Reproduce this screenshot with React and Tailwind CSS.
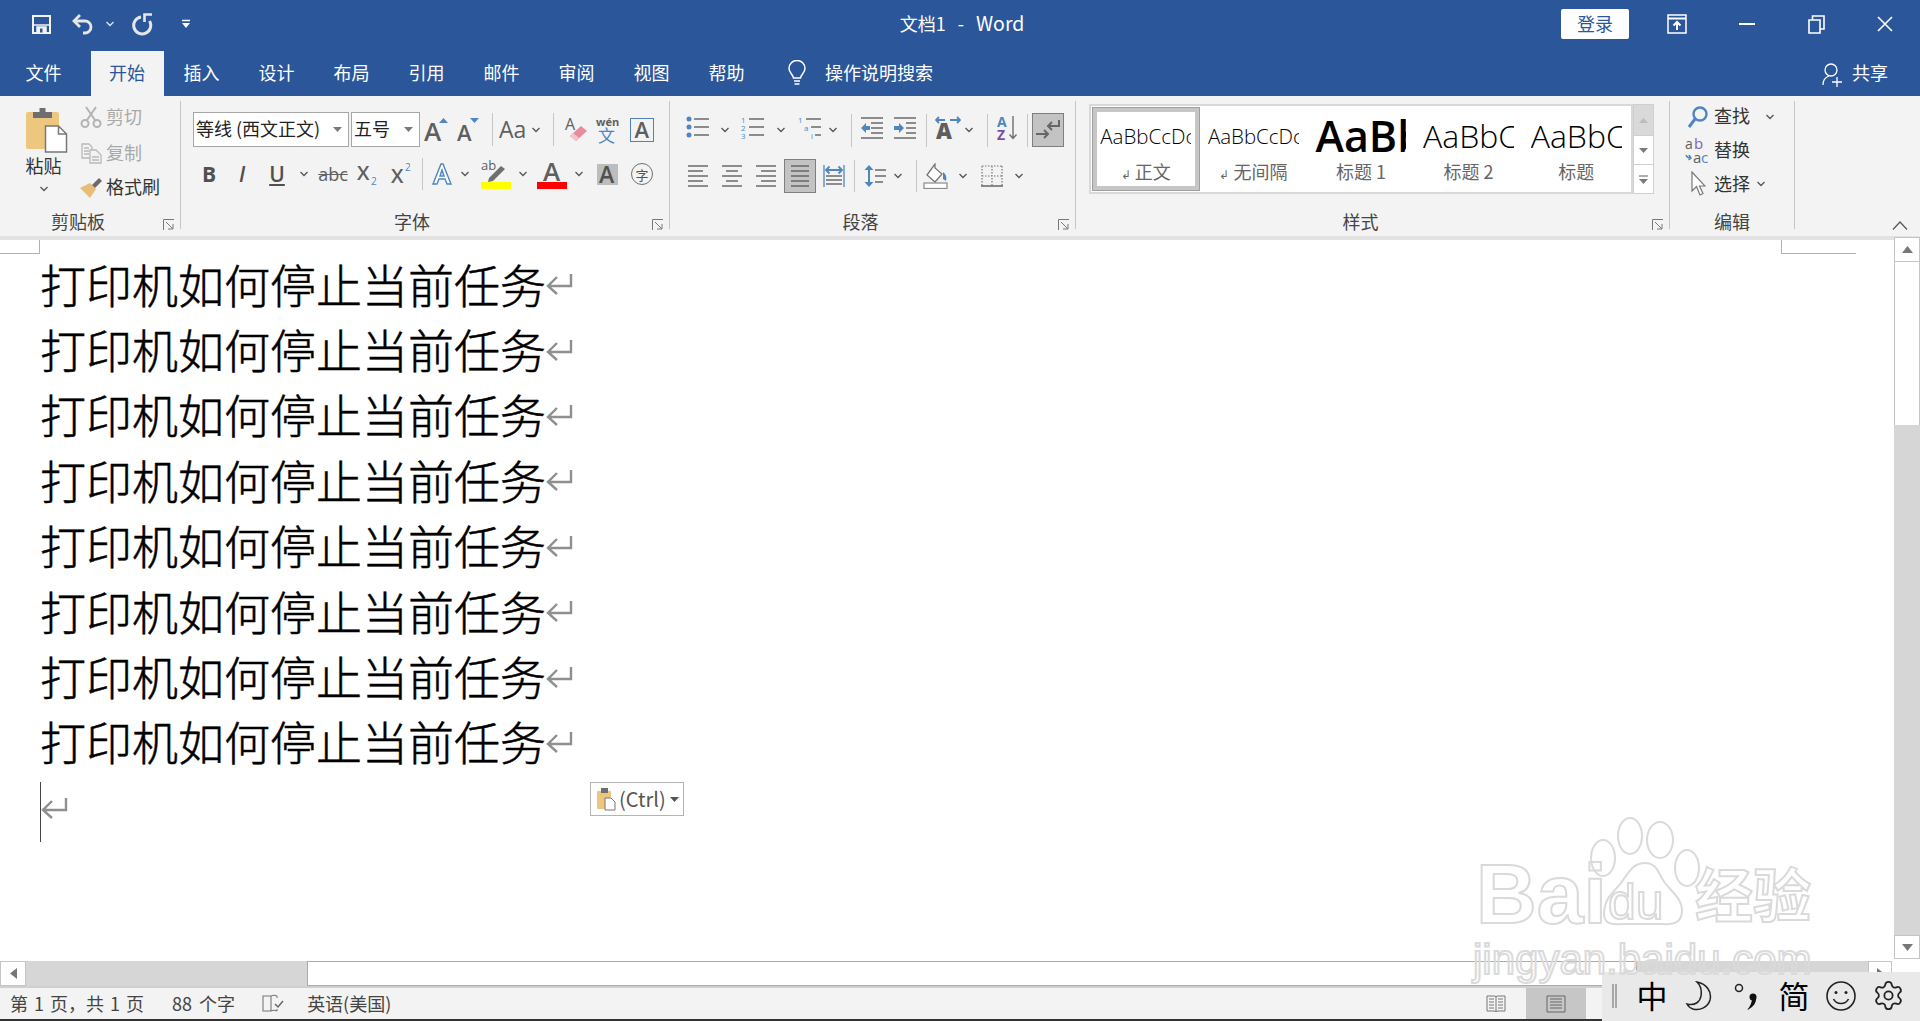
import React from "react";
import { Settings } from "lucide-react";

const G = "#5f5f5f";
const B = "#4f86c1";

const C = ({ className = "", children }) => (
  <div className={"flex items-center justify-center shrink-0 " + className}>{children}</div>
);
const Sep = ({ className = "" }) => <div className={"w-px bg-[#c6c6c6] shrink-0 " + className} />;
const Chev = ({ color = "#555" }) => (
  <svg width="10" height="6" viewBox="0 0 10 6"><path d="M1.5 1 L5 4.5 L8.5 1" fill="none" stroke={color} strokeWidth="1.3" /></svg>
);
const Launcher = () => (
  <svg width="12" height="12" viewBox="0 0 12 12" className="absolute right-[5px] bottom-[-2px]">
    <path d="M.5 11V.5H11M3 3l6.5 6.5M5 10h5V5" fill="none" stroke="#777" strokeWidth="1" />
  </svg>
);
const Letter = ({ x, y, s, fill = G, w = 600, children, f = "Open Sans" }) => (
  <text x={x} y={y} fontSize={s} fill={fill} fontWeight={w} fontFamily={f}>{children}</text>
);
const Lines = ({ rows, stroke = G, sw = 1.3 }) => (
  <g stroke={stroke} strokeWidth={sw}>
    {rows.map((r, i) => <line key={i} x1={r[0]} x2={r[1]} y1={r[2]} y2={r[2]} />)}
  </g>
);

const Tab = ({ children }) => <div className="w-[75px] text-center text-white">{children}</div>;

function TitleBar() {
  return (
    <div className="h-[51px] bg-[#2b579a] flex items-center pb-[3px] text-white shrink-0">
      <div className="flex-1 flex items-center pl-[29px]">
        <C className="w-[24px]">
          <svg width="19" height="19" viewBox="0 0 19 19"><path d="M1 1h17v17H1z" fill="none" stroke="#f2f2f2" strokeWidth="2" /><rect x="1" y="1" width="17" height="9" fill="none" stroke="#f2f2f2" strokeWidth="1.500" /><path d="M5 18v-6h9v6" fill="#f2f2f2" stroke="#f2f2f2" strokeWidth="1.500" /><rect x="8" y="13.500" width="2.500" height="4" fill="#2b579a" /></svg>
        </C>
        <C className="w-[24px] ml-[18px]">
          <svg width="24" height="24" viewBox="0 0 24 24" fill="none" stroke="#e6e6e6" strokeWidth="2.800"><path d="M9 3 L3 9 L9 15" /><path d="M3 9h11a6 6 0 0 1 0 12h-2" /></svg>
        </C>
        <C className="w-[10px] ml-[10px]"><Chev color="#dfe6f0" /></C>
        <C className="w-[24px] ml-[15px]">
          <svg width="22" height="24" viewBox="0 0 22 24" fill="none" stroke="#e6e6e6" strokeWidth="3"><path d="M10 5 A8.500 8.500 0 1 0 18.500 9" /><path d="M13.500 10 V2.500 H21" strokeWidth="2.600" /></svg>
        </C>
        <C className="w-[12px] ml-[26px]">
          <svg width="10" height="10" viewBox="0 0 10 10"><path d="M1 1.500h8" stroke="#fff" strokeWidth="1.500" /><path d="M1 4h8L5 9z" fill="#fff" /></svg>
        </C>
      </div>
      <div className="text-[18px] leading-[24px] flex items-center pb-[2px]">
        <span>文档1</span><span className="ml-[12px]">-</span><span className="ml-[12px] text-[19.500px]">Word</span>
      </div>
      <div className="flex-1 flex items-center justify-end pr-[25px]">
        <C className="w-[68px] h-[30px] bg-white rounded-[2px] text-[#2b579a] text-[18px] leading-[30px] pb-[2px]">登录</C>
        <C className="w-[20px] ml-[38px]">
          <svg width="20" height="20" viewBox="0 0 20 20" fill="none" stroke="#fff"><path d="M1 1h18v18H1z" strokeWidth="1.500" /><path d="M1 4.500h18" strokeWidth="2" /><path d="M10 16V8M6.500 11.500 10 8l3.500 3.500" strokeWidth="2" /></svg>
        </C>
        <C className="w-[20px] ml-[50px]"><div className="w-[16px] h-[2px] bg-white" /></C>
        <C className="w-[20px] ml-[49px]">
          <svg width="17" height="19" viewBox="0 0 17 19" fill="none" stroke="#fff" strokeWidth="1.600"><path d="M1 5h11v13H1z" /><path d="M4.500 5V1H16v13h-4" /></svg>
        </C>
        <C className="w-[20px] ml-[49px]">
          <svg width="16" height="16" viewBox="0 0 16 16" stroke="#fff" strokeWidth="1.600"><path d="M1 1l14 14M15 1 1 15" /></svg>
        </C>
      </div>
    </div>
  );
}

function TabRow() {
  return (
    <div className="h-[45px] bg-[#2b579a] flex items-stretch text-[18px] shrink-0">
      <div className="w-[91px] pr-[4px] flex items-center justify-center pb-[2px] text-white">文件</div>
      <div className="w-[73px] bg-[#f3f3f3] text-[#2b579a] pr-px flex items-center justify-center pb-[2px]">开始</div>
      <div className="flex items-center pb-[2px]">
        <Tab>插入</Tab><Tab>设计</Tab><Tab>布局</Tab><Tab>引用</Tab><Tab>邮件</Tab><Tab>审阅</Tab><Tab>视图</Tab><Tab>帮助</Tab>
        <C className="w-[22px] ml-[22px]">
          <svg width="20" height="26" viewBox="0 0 20 26" fill="none" stroke="#fff" strokeWidth="1.500"><path d="M6.500 18c0-3-4.500-5-4.500-9.500a8 8 0 0 1 16 0C18 13 13.500 15 13.500 18z" /><path d="M7 21h6M7.500 24h5" /></svg>
        </C>
        <span className="ml-[17px] text-white">操作说明搜索</span>
      </div>
      <div className="flex-1 flex items-center justify-end pr-[32px] pb-[2px] text-white">
        <svg width="20" height="26" viewBox="0 0 20 26" fill="none" stroke="#fff" strokeWidth="1.300" className="mr-[10px] mt-[4px]"><circle cx="9" cy="8" r="6" /><path d="M1 23c0-5 3-8 6-9M15 15v10M10 20h10" /></svg>
        <span>共享</span>
      </div>
    </div>
  );
}

function Group({ className = "", label, labelPad = "", launcher = true, children }) {
  return (
    <div className={"flex flex-col shrink-0 border-r border-[#c6c6c6] relative " + className}>
      <div className="h-[112px]">{children}</div>
      <div className={"h-[16px] leading-[16px] text-[18px] text-[#444] text-center relative " + labelPad}>{label}</div>
      {launcher && <Launcher />}
    </div>
  );
}

function Clipboard() {
  return (
    <Group className="w-[181px]" label="剪贴板" labelPad="pr-[24px]">
      <div className="flex">
        <div className="ml-[7px] w-[73px] flex flex-col items-center pt-[6px]">
          <svg width="44" height="46" viewBox="0 0 44 46" className="ml-[6px]">
            <rect x="1" y="5" width="33" height="37" rx="2" fill="#eec77f" />
            <path d="M8 11V5h6.500V1h6v4H27v6z" fill="#6e6e6e" />
            <path d="M20.500 19h13l8 8v18H20.500z" fill="#fff" stroke="#777" strokeWidth="1.500" />
            <path d="M33.500 19v8h8" fill="none" stroke="#777" strokeWidth="1.500" />
          </svg>
          <div className="text-[18px] leading-[24px] text-[#333]">粘贴</div>
          <div className="mt-[8px] h-[8px] flex items-center"><Chev /></div>
        </div>
        <div className="flex flex-col text-[18px] -ml-[1px]">
          <div className="h-[32px] flex items-center text-[#a9a9a9]">
            <C className="w-[24px]">
              <svg width="22" height="22" viewBox="0 0 22 22" fill="none" stroke="#b3b3b3" strokeWidth="2"><circle cx="5" cy="17.500" r="3.500" /><circle cx="17" cy="17.500" r="3.500" /><path d="M7 14 16 1M15 14 6 1" /></svg>
            </C>
            <span className="ml-[3px] pb-[2px]">剪切</span>
          </div>
          <div className="h-[32px] mt-[4px] flex items-center text-[#a9a9a9]">
            <C className="w-[24px]">
              <svg width="21" height="21" viewBox="0 0 21 21" fill="none" stroke="#b9b9b9" strokeWidth="1.300"><path d="M1 1h7l3 3v11H1zM3 5h5M3 8h5M3 11h5" /><path d="M9 7h6l5 5v8H9zM11 14h7M11 17h7" fill="#f3f3f3" /></svg>
            </C>
            <span className="ml-[3px] pb-[2px]">复制</span>
          </div>
          <div className="h-[32px] mt-[3px] flex items-center text-[#333]">
            <C className="w-[24px]">
              <svg width="24" height="22" viewBox="0 0 24 22"><path d="M1 11 11 6l6 6-6 9z" fill="#e8bd77" /><path d="M13 8 20 1l3 3-7 7z" fill="#6b6b6b" /></svg>
            </C>
            <span className="ml-[3px] pb-[3px]">格式刷</span>
          </div>
        </div>
      </div>
    </Group>
  );
}

const ComboCaret = () => <svg width="9" height="5" viewBox="0 0 9 5"><path d="M0 0h9L4.500 5z" fill="#7a7a7a" /></svg>;

function FontGroup() {
  return (
    <Group className="w-[489px]" label="字体" labelPad="pr-[26px]">
      <div className="flex items-center h-[35px] mt-[11px] pl-[12px]">
        <div className="w-[156px] h-[35px] bg-white border border-[#a6a6a6] flex items-center pl-[2px] pr-[6px] text-[18px] text-[#222] justify-between">
          <span className="pb-[2px]">等线 (西文正文)</span><ComboCaret />
        </div>
        <div className="w-[69px] ml-[2px] h-[35px] bg-white border border-[#a6a6a6] flex items-center pl-[2px] pr-[6px] text-[18px] text-[#222] justify-between">
          <span className="pb-[2px]">五号</span><ComboCaret />
        </div>
        <C className="w-[26px] ml-[4px]">
          <svg width="26" height="26" viewBox="0 0 26 26"><Letter x="0" y="24" s="26">A</Letter><path d="M15 6h9l-4.500-5z" fill={B} /></svg>
        </C>
        <C className="w-[38px]">
          <svg width="26" height="26" viewBox="0 0 26 26"><Letter x="1" y="24" s="22">A</Letter><path d="M14 1h9l-4.500 5z" fill={B} /></svg>
        </C>
        <Sep className="ml-[4px] h-[33px]" />
        <C className="w-[26px] ml-[7px]">
          <svg width="28" height="24" viewBox="0 0 28 24" className="overflow-visible"><Letter x="0" y="20" s="23" w="500">Aa</Letter></svg>
        </C>
        <C className="w-[10px] ml-[5px]"><Chev /></C>
        <Sep className="ml-[12px] h-[33px]" />
        <C className="w-[26px] ml-[9px]">
          <svg width="24" height="26" viewBox="0 0 24 26"><Letter x="1" y="13" s="16" w="500">A</Letter><path d="M6 19 17 9l6 5-11 10z" fill="#e98b9d" /><path d="M6 19l6 5 3-3-6-5z" fill="#f3c4cd" /></svg>
        </C>
        <C className="w-[26px] ml-[6px]">
          <svg width="26" height="28" viewBox="0 0 26 28" className="overflow-visible"><Letter x="1" y="10" s="11" w="700">wén</Letter><Letter x="3" y="26" s="17" fill={B} w="400" f="Noto Sans CJK SC">文</Letter></svg>
        </C>
        <C className="w-[24px] h-[24px] ml-[9px] border border-[#4f81bd]">
          <svg width="20" height="20" viewBox="0 0 20 20"><Letter x="2.500" y="18" s="22">A</Letter></svg>
        </C>
      </div>
      <div className="flex items-center h-[36px] mt-[9px] pl-[16px]">
        <C className="w-[24px]"><span className="font-['Open_Sans',sans-serif] font-bold text-[21px] text-[#505050] leading-none">B</span></C>
        <C className="w-[24px] ml-[9px]"><span className="font-['Open_Sans',sans-serif] italic font-semibold text-[21px] text-[#505050] leading-none">I</span></C>
        <C className="w-[24px] ml-[11px]"><span className="font-['Open_Sans',sans-serif] font-semibold underline underline-offset-2 text-[21px] text-[#505050] leading-none">U</span></C>
        <C className="w-[10px] ml-[10px]"><Chev /></C>
        <C className="w-[32px] ml-[8px]"><span className="font-['Open_Sans',sans-serif] line-through text-[18px] text-[#606060] leading-none">abc</span></C>
        <C className="w-[24px] ml-[7px]">
          <svg width="24" height="24" viewBox="0 0 24 24"><Letter x="1" y="18" s="20">X</Letter><Letter x="15" y="23" s="10" fill={B} w="500">2</Letter></svg>
        </C>
        <C className="w-[24px] ml-[10px]">
          <svg width="24" height="24" viewBox="0 0 24 24"><Letter x="1" y="21" s="20">X</Letter><Letter x="15" y="9" s="10" fill={B} w="500">2</Letter></svg>
        </C>
        <Sep className="ml-[8px] h-[32px]" />
        <C className="w-[24px] ml-[7px]">
          <svg width="24" height="26" viewBox="0 0 24 26"><path d="M3 23 11 3h2l8 20h-4l-2-5H9l-2 5zM10 15h4l-2-6z" fill="#fff" stroke={B} strokeWidth="1.400" /></svg>
        </C>
        <C className="w-[10px] ml-[6px]"><Chev /></C>
        <C className="w-[28px] ml-[12px]">
          <svg width="30" height="30" viewBox="0 0 30 30" className="overflow-visible"><Letter x="0" y="11" s="13" w="400">ab</Letter><path d="M8 19 20 7l4 3-12 12-5 1z" fill="#6f6f6f" /><rect x="0" y="23" width="30" height="7" fill="#ffff00" /></svg>
        </C>
        <C className="w-[10px] ml-[8px]"><Chev /></C>
        <C className="w-[28px] ml-[10px]">
          <svg width="30" height="30" viewBox="0 0 30 30" className="overflow-visible"><Letter x="6" y="22" s="26">A</Letter><rect x="0" y="23" width="30" height="7" fill="#ff0000" /></svg>
        </C>
        <C className="w-[10px] ml-[8px]"><Chev /></C>
        <C className="w-[21px] h-[21px] ml-[13px] bg-[#bdbdbd]">
          <svg width="21" height="21" viewBox="0 0 21 21"><Letter x="2" y="19" s="23" fill="#505050">A</Letter></svg>
        </C>
        <C className="w-[24px] ml-[12px]">
          <div className="w-[22px] h-[22px] rounded-full border-[1.5px] border-[#707070] flex items-center justify-center text-[13px] leading-none text-[#555]">字</div>
        </C>
      </div>
    </Group>
  );
}

const AlignIcon = ({ rows }) => (
  <svg width="24" height="24" viewBox="0 0 24 24"><Lines sw={1.4} rows={rows} /></svg>
);

function ParaGroup() {
  return (
    <Group className="w-[406px]" label="段落" labelPad="pr-[24px]">
      <div className="flex items-center h-[34px] mt-[12px] pl-[16px]">
        <C className="w-[24px] -mt-[4px]">
          <svg width="24" height="24" viewBox="0 0 24 24"><circle cx="3" cy="3" r="2.500" fill={B} /><circle cx="3" cy="11" r="2.500" fill={B} /><circle cx="3" cy="19" r="2.500" fill={B} /><Lines sw={1.4} rows={[[8, 23, 3], [8, 23, 11], [8, 23, 19]]} /></svg>
        </C>
        <C className="w-[10px] ml-[10px]"><Chev /></C>
        <C className="w-[24px] ml-[11px] -mt-[4px]">
          <svg width="24" height="24" viewBox="0 0 24 24"><Letter x="0" y="7" s="8" fill={B} w="500">1</Letter><Letter x="0" y="15" s="8" fill={B} w="500">2</Letter><Letter x="0" y="23" s="8" fill={B} w="500">3</Letter><Lines sw={1.4} rows={[[8, 23, 3], [8, 23, 11], [8, 23, 19]]} /></svg>
        </C>
        <C className="w-[10px] ml-[11px]"><Chev /></C>
        <C className="w-[24px] ml-[12px] -mt-[4px]">
          <svg width="24" height="24" viewBox="0 0 24 24"><Letter x="0" y="7" s="8" fill={B} w="500">1</Letter><Letter x="6" y="15" s="8" fill={B} w="500">a</Letter><Letter x="13" y="23" s="8" fill={B} w="500">i</Letter><Lines sw={1.4} rows={[[8, 23, 3], [13, 23, 11], [17, 23, 19]]} /></svg>
        </C>
        <C className="w-[10px] ml-[6px]"><Chev /></C>
        <Sep className="ml-[13px] h-[33px]" />
        <C className="w-[24px] ml-[8px] -mt-[4px]">
          <svg width="24" height="24" viewBox="0 0 24 24"><Lines sw={1.4} rows={[[1, 23, 2], [11, 23, 7], [11, 23, 12], [11, 23, 17], [1, 23, 22]]} /><path d="M1 12l5-5v3h4v4H6v3z" fill={B} /></svg>
        </C>
        <C className="w-[24px] ml-[9px] -mt-[4px]">
          <svg width="24" height="24" viewBox="0 0 24 24"><Lines sw={1.4} rows={[[1, 23, 2], [13, 23, 7], [13, 23, 12], [13, 23, 17], [1, 23, 22]]} /><path d="M11 12 6 7v3H1v4h5v3z" fill={B} /></svg>
        </C>
        <Sep className="ml-[9px] h-[33px]" />
        <C className="w-[26px] ml-[8px] -mt-[4px]">
          <svg width="26" height="24" viewBox="0 0 26 24"><Letter x="1" y="23" s="22" w="800">A</Letter><path d="M1 4h9M15 4h10M4 1 1 4l3 3M22 1l3 3-3 3" fill="none" stroke={B} strokeWidth="1.800" /></svg>
        </C>
        <C className="w-[10px] ml-[3px]"><Chev /></C>
        <Sep className="ml-[13px] h-[33px]" />
        <C className="w-[24px] ml-[8px] -mt-[4px]">
          <svg width="22" height="26" viewBox="0 0 22 26"><Letter x="0" y="12" s="14" fill={B} w="700">A</Letter><Letter x="0" y="25" s="14" fill="#7b4fa6" w="700">Z</Letter><path d="M16 1v22M12.500 19.500 16 23.500l3.500-4" fill="none" stroke="#6f6f6f" strokeWidth="1.400" /></svg>
        </C>
        <Sep className="ml-[7px] h-[33px]" />
        <C className="w-[32px] h-[34px] ml-[4px] bg-[#c3c3c3] border border-[#7f7f7f]">
          <svg width="26" height="22" viewBox="0 0 26 22" fill="none" stroke="#666" strokeWidth="2"><path d="M24 1v6H13M17 3l-4 4 4 4" /><path d="M1 15h12M9 11l4 4-4 4" /></svg>
        </C>
      </div>
      <div className="flex items-center h-[34px] mt-[12px] pl-[16px]">
        <C className="w-[24px]"><AlignIcon rows={[[2, 22, 2], [2, 17, 7], [2, 22, 12], [2, 17, 17], [2, 22, 22]]} /></C>
        <C className="w-[24px] ml-[10px]"><AlignIcon rows={[[2, 22, 2], [6, 18, 7], [2, 22, 12], [6, 18, 17], [2, 22, 22]]} /></C>
        <C className="w-[24px] ml-[10px]"><AlignIcon rows={[[2, 22, 2], [7, 22, 7], [2, 22, 12], [7, 22, 17], [2, 22, 22]]} /></C>
        <C className="w-[32px] h-[34px] ml-[6px] bg-[#c3c3c3] border border-[#7f7f7f]"><AlignIcon rows={[[3, 21, 2], [3, 21, 7], [3, 21, 12], [3, 21, 17], [3, 21, 22]]} /></C>
        <C className="w-[24px] ml-[6px]">
          <svg width="24" height="24" viewBox="0 0 24 24"><Lines sw={1.4} rows={[[4, 20, 12], [4, 20, 16], [4, 20, 20]]} /><path d="M2 1v22M22 1v22" stroke={B} strokeWidth="1.300" /><path d="M4 6h16M7.500 2.500 4 6l3.500 3.500M16.500 2.500 20 6l-3.500 3.500" fill="none" stroke={B} strokeWidth="1.800" /></svg>
        </C>
        <Sep className="ml-[8px] h-[32px]" />
        <C className="w-[24px] ml-[8px]">
          <svg width="24" height="24" viewBox="0 0 24 24"><path d="M6 1 1.500 6H5v12H1.500L6 23l4.500-5H7V6h3.500z" fill={B} /><Lines sw={1.4} rows={[[12, 23, 6], [12, 23, 12], [12, 20, 18]]} /></svg>
        </C>
        <C className="w-[10px] ml-[6px]"><Chev /></C>
        <Sep className="ml-[13px] h-[32px]" />
        <C className="w-[26px] ml-[6px]">
          <svg width="26" height="26" viewBox="0 0 26 26"><path d="M12 1v4l7 6-7 8-8-7z" fill="#fff" stroke="#777" strokeWidth="1.300" /><path d="M20 9c3 2 4 5 3 9l-3-2z" fill={B} /><rect x="1" y="20" width="23" height="5.500" fill="#fff" stroke="#8a8a8a" strokeWidth="1.200" /></svg>
        </C>
        <C className="w-[10px] ml-[9px]"><Chev /></C>
        <C className="w-[24px] ml-[12px]">
          <svg width="22" height="22" viewBox="0 0 22 22" fill="none" stroke="#777" strokeWidth="1.200"><path d="M1 1h20M1 1v20M21 1v20M11 1v20M1 11h20" strokeDasharray="1.500 1.500" /><path d="M0 21h22" stroke="#666" strokeWidth="1.500" /></svg>
        </C>
        <C className="w-[10px] ml-[10px]"><Chev /></C>
      </div>
    </Group>
  );
}

const StyleItem = ({ sample, caption, mark, sel, cls }) => (
  <div className={"w-[107.600px] shrink-0 flex flex-col items-center overflow-hidden " + (sel ? "border-[5px] border-[#c6c6c6] outline outline-1 outline-[#a0a0a0] -outline-offset-1" : "")}>
    <div className={"w-[91px] h-[58px] overflow-hidden whitespace-nowrap flex items-center text-black font-['Open_Sans',sans-serif] " + (sel ? "-mt-[5px] " : "") + cls}>{sample}</div>
    <div className="text-[18px] leading-[16px] -mt-[2px] text-[#666] whitespace-nowrap">{mark && <span className="text-[12px] mr-[4px]">↲</span>}{caption}</div>
  </div>
);

function Styles() {
  return (
    <Group className="w-[594px]" label="样式" labelPad="pr-[24px]">
      <div className="ml-[13px] mt-[3px] w-[565px] h-[90px] flex">
        <div className="w-[544px] bg-white border-2 border-[#d8d8d8] flex py-px pl-px">
          <StyleItem sel mark sample="AaBbCcDc" caption="正文" cls="text-[20.500px] font-light" />
          <StyleItem mark sample="AaBbCcDc" caption="无间隔" cls="text-[20.500px] font-light" />
          <StyleItem sample="AaBbCc" caption="标题 1" cls="text-[43px] font-semibold" />
          <StyleItem sample="AaBbCc" caption="标题 2" cls="text-[32px] font-light" />
          <StyleItem sample="AaBbCc" caption="标题" cls="text-[32px] font-light" />
        </div>
        <div className="w-[21px] flex flex-col">
          <C className="h-[32px] bg-[#d9d9d9] border border-[#cfcfcf]"><svg width="9" height="5" viewBox="0 0 9 5"><path d="M0 5h9L4.500 0z" fill="#bcbcbc" /></svg></C>
          <C className="h-[29px] bg-white border border-t-0 border-[#d0d0d0]"><ComboCaret /></C>
          <C className="h-[29px] bg-white border border-t-0 border-[#d0d0d0]"><svg width="9" height="9" viewBox="0 0 9 9"><path d="M0 1h9" stroke="#7a7a7a" strokeWidth="1.200" /><path d="M0 4h9L4.500 9z" fill="#7a7a7a" /></svg></C>
        </div>
      </div>
    </Group>
  );
}

function Editing() {
  return (
    <Group className="w-[125px]" label="编辑" launcher={false}>
      <div className="pl-[15px] text-[18px] text-[#333] flex flex-col">
        <div className="h-[32px] flex items-center">
          <C className="w-[25px]">
            <svg width="20" height="24" viewBox="0 0 20 24" fill="none"><circle cx="12" cy="9" r="6.500" stroke={B} strokeWidth="2.400" /><path d="M7 14 1 22" stroke={B} strokeWidth="3" /></svg>
          </C>
          <span className="ml-[4px] pb-[4px]">查找</span>
          <C className="w-[10px] ml-[15px]"><Chev /></C>
        </div>
        <div className="h-[32px] mt-[2px] flex items-center">
          <C className="w-[25px]">
            <svg width="25" height="26" viewBox="0 0 25 26" className="overflow-visible"><Letter x="0" y="11" s="14" w="500">a</Letter><Letter x="9" y="11" s="15" fill="#8a5bb5" w="500">b</Letter><path d="M1 17c1 3 3 3 5 3M3.500 22 6 20l-2-3" fill="none" stroke={B} strokeWidth="1.500" /><Letter x="8" y="25" s="15" fill={G} w="500">a</Letter><Letter x="16" y="25" s="15" fill={B} w="500">c</Letter></svg>
          </C>
          <span className="ml-[4px] pb-[4px]">替换</span>
        </div>
        <div className="h-[32px] mt-[1px] flex items-center">
          <C className="w-[25px]">
            <svg width="16" height="26" viewBox="0 0 16 26" fill="#fff" stroke="#777" strokeWidth="1.200"><path d="M2 1v19l4.500-4.500L10 24l3-1.500-3.500-7.500H15z" /></svg>
          </C>
          <span className="ml-[4px] pb-[2px]">选择</span>
          <C className="w-[10px] ml-[6px]"><Chev /></C>
        </div>
      </div>
    </Group>
  );
}

function Ribbon() {
  return (
    <div className="h-[144px] shrink-0 bg-[#f3f3f3] border-b-[4px] border-[#e2e2e2] pt-[5px] pb-[7px] flex relative">
      <Clipboard />
      <FontGroup />
      <ParaGroup />
      <Styles />
      <Editing />
      <div className="flex-1 flex items-end justify-end pr-[12px]">
        <svg width="16" height="9" viewBox="0 0 16 9" className="-mb-[1px]"><path d="M1 8.500 8 1l7 7.500" fill="none" stroke="#555" strokeWidth="1.200" /></svg>
      </div>
    </div>
  );
}

const Ret = ({ className = "" }) => (
  <svg width="27" height="23" viewBox="0 0 27 23" fill="none" stroke="#8f8f8f" strokeWidth="2.400" className={"shrink-0 " + className}><path d="M25 1v12H3M11 4 2 13l9 8" /></svg>
);

const TEXT = "打印机如何停止当前任务";

function Page() {
  const rows = [1, 2, 3, 4, 5, 6, 7, 8];
  return (
    <div className="flex-1 bg-white relative pt-[10px] pl-[40px] overflow-hidden">
      <div className="absolute left-0 top-0 w-[40px] h-[14px] border-r border-b border-[#b0b0b0]" />
      <div className="absolute left-[1781px] top-0 w-[75px] h-[14px] border-l border-b border-[#b0b0b0]" />
      {rows.map((r) => (
        <div key={r} className="h-[65.4px] flex items-center text-[46px] text-black whitespace-nowrap font-light [-webkit-text-stroke:0.5px_#000] leading-none">
          <span className="w-[505px]">{TEXT}</span>
          <Ret className="mt-[4px] ml-[1px]" />
        </div>
      ))}
      <div className="mt-[9px] h-[60px] flex relative">
        <div className="w-px h-[60px] bg-[#444]" />
        <Ret className="mt-[15px]" />
        <div className="absolute left-[550px] top-0 w-[94px] h-[34px] bg-white border border-[#b4b4b4] flex items-center pl-[6px] text-[#555]">
          <svg width="19" height="24" viewBox="0 0 19 24" className="shrink-0"><rect x="0" y="4" width="14" height="18" fill="#eec77f" /><rect x="4" y="1" width="7" height="5" fill="#6e6e6e" /><path d="M8 11h6l4 4v8H8z" fill="#fff" stroke="#777" /></svg>
          <span className="ml-[3px] text-[20px] leading-none whitespace-nowrap">(Ctrl)</span>
          <svg width="9" height="5" viewBox="0 0 9 5" className="ml-[4px] shrink-0"><path d="M0 0h9L4.500 5z" fill="#555" /></svg>
        </div>
      </div>
    </div>
  );
}

const ScrollTri = ({ d, w = 11, h = 7 }) => <svg width={w} height={h} viewBox={`0 0 ${w} ${h}`}><path d={d} fill="#777" /></svg>;

function VScroll() {
  return (
    <div className="w-[26px] shrink-0 flex flex-col -mt-[3px] relative bg-white">
      <C className="h-[25px] border border-[#c4c4c4] bg-white"><ScrollTri d="M0 7h11L5.500 0z" /></C>
      <div className="h-[163px] border-l border-r border-[#c4c4c4] bg-white" />
      <div className="flex-1 bg-[#d6d6d6]" />
      <C className="h-[24px] border border-[#c4c4c4] bg-white"><ScrollTri d="M0 0h11L5.500 7z" /></C>
      <div className="h-[2px]" />
    </div>
  );
}

function HScroll() {
  return (
    <div className="h-[25px] shrink-0 flex bg-white">
      <C className="w-[26px] border border-[#c4c4c4]"><ScrollTri w={7} h={11} d="M7 0v11L0 5.500z" /></C>
      <div className="w-[281px] bg-[#d6d6d6]" />
      <div className="w-[1330px] border border-[#ababab] bg-white" />
      <div className="w-[231px] bg-[#d6d6d6]" />
      <C className="w-[24px] border border-[#c4c4c4]"><ScrollTri w={7} h={11} d="M0 0v11l7-5.500z" /></C>
    </div>
  );
}

function ImeBar() {
  return (
    <div className="w-[318px] h-[49px] -mt-[16px] -mb-[2px] bg-[#e9e9e9] flex items-center pl-[10px] pb-[2px] text-black shrink-0 relative">
      <div className="w-[5px] h-[24px] border-l-2 border-r-2 border-[#a8a8a8]" />
      <C className="w-[34px] ml-[18px] text-[31px] leading-none pb-[3px] -mr-[1px]">中</C>
      <C className="w-[34px] ml-[14px] -mr-[1px]">
        <svg width="30" height="30" viewBox="0 0 30 30" fill="none" stroke="#222" strokeWidth="1.500"><path d="M13 1c10 2 15 10 13 18-2 7-10 11-17 9-3-1-5-3-6-5 8 2 13-2 14-8 1-6-1-11-4-14z" /></svg>
      </C>
      <C className="w-[34px] ml-[14px]">
        <svg width="28" height="30" viewBox="0 0 28 30"><circle cx="7" cy="7" r="3.500" fill="none" stroke="#222" strokeWidth="1.500" /><circle cx="21" cy="16" r="3.500" fill="#111" /><path d="M24 16c1 5-3 11-9 13 3-3 5-8 5-11z" fill="#111" /></svg>
      </C>
      <C className="w-[34px] ml-[14px] text-[31px] leading-none pb-[3px] -mr-[1px]">简</C>
      <C className="w-[34px] ml-[14px] -mr-[1px]">
        <svg width="30" height="30" viewBox="0 0 30 30" fill="none" stroke="#222" strokeWidth="1.600"><circle cx="15" cy="15" r="14" /><circle cx="10" cy="11.500" r="1.500" fill="#222" stroke="none" /><circle cx="20" cy="11.500" r="1.500" fill="#222" stroke="none" /><path d="M7.500 18c3 6 12 6 15 0" /></svg>
      </C>
      <C className="w-[34px] ml-[14px]"><Settings size={33} strokeWidth={1.300} color="#222" /></C>
    </div>
  );
}

function StatusBar() {
  return (
    <div className="h-[35px] shrink-0 bg-[#f3f3f3] border-t-2 border-b-2 border-t-[#cfcfcf] border-b-[#333] flex items-center text-[18px] text-[#444]">
      <span className="ml-[10px] whitespace-nowrap [word-spacing:2px]">第 1 页，共 1 页</span>
      <span className="ml-[28px] whitespace-nowrap [word-spacing:3px]">88 个字</span>
      <svg width="22" height="20" viewBox="0 0 22 20" fill="none" stroke="#777" strokeWidth="1.100" className="ml-[27px]"><path d="M1 2h8v15H1zM9 2c2-1 4-1 6 0M9 17c2-1 4-1 6 0M15 2v2M15 15v2" /><path d="M13 10l3 3 5-6" stroke="#666" strokeWidth="1.500" /></svg>
      <span className="ml-[23px] whitespace-nowrap">英语(美国)</span>
      <div className="flex-1 flex justify-end items-center h-full">
        <C className="w-[24px]">
          <svg width="20" height="18" viewBox="0 0 20 18" fill="none" stroke="#777" strokeWidth="1"><path d="M1 1h8l1 1 1-1h8v15h-8l-1 1-1-1H1zM10 2v15M3 4h5M3 7h5M3 10h5M3 13h5M12 4h5M12 7h5M12 10h5M12 13h5" /></svg>
        </C>
        <C className="w-[60px] h-full ml-[18px] bg-[#c6c6c6]">
          <svg width="20" height="18" viewBox="0 0 20 18" fill="none" stroke="#666" strokeWidth="1"><path d="M1 1h18v16H1zM4 4h12M4 7h12M4 10h12M4 13h12" /></svg>
        </C>
        <div className="w-[16px]" />
        <ImeBar />
      </div>
    </div>
  );
}

function Watermark() {
  const stroke = "text-transparent [-webkit-text-stroke:2px_#dadada]";
  return (
    <div className="absolute left-[1473px] top-[817px] w-[350px] h-[170px] pointer-events-none font-['Liberation_Sans',sans-serif]">
      <svg width="350" height="170" viewBox="0 0 350 170" fill="rgba(255,255,255,.6)" stroke="#dadada" strokeWidth="2" className="absolute left-0 top-0">
        <ellipse cx="157" cy="19" rx="12" ry="18" />
        <ellipse cx="187" cy="23" rx="13" ry="18" />
        <ellipse cx="130" cy="41" rx="12" ry="18" />
        <ellipse cx="214" cy="51" rx="12" ry="18" />
        <path d="M172 46c-12 0-16 9-24 20-7 9-17 15-17 31 0 10 8 11 20 10 10 0 30 0 38 0 13 1 20-2 20-14 0-11-10-18-17-27-7-10-8-20-20-20z" />
      </svg>
      <span className={"absolute left-[3px] top-[32px] text-[84px] leading-[90px] font-bold " + stroke}>Bai</span>
      <span className={"absolute left-[135px] top-[55px] text-[50px] leading-[60px] " + stroke}>du</span>
      <span className={"absolute left-[222px] top-[40px] text-[58px] leading-[70px] font-['Noto_Sans_CJK_SC',sans-serif] font-bold whitespace-nowrap " + stroke}>经验</span>
      <span className={"absolute left-[0px] top-[113px] text-[42px] leading-[60px] whitespace-nowrap " + stroke}>jingyan.baidu.com</span>
    </div>
  );
}

export default function App() {
  return (
    <div className="w-[1920px] h-[1021px] overflow-hidden relative flex flex-col bg-white font-['Noto_Sans_CJK_SC',sans-serif]">
      <TitleBar />
      <TabRow />
      <Ribbon />
      <div className="flex-1 flex min-h-0">
        <Page />
        <VScroll />
      </div>
      <HScroll />
      <StatusBar />
      <Watermark />
    </div>
  );
}
